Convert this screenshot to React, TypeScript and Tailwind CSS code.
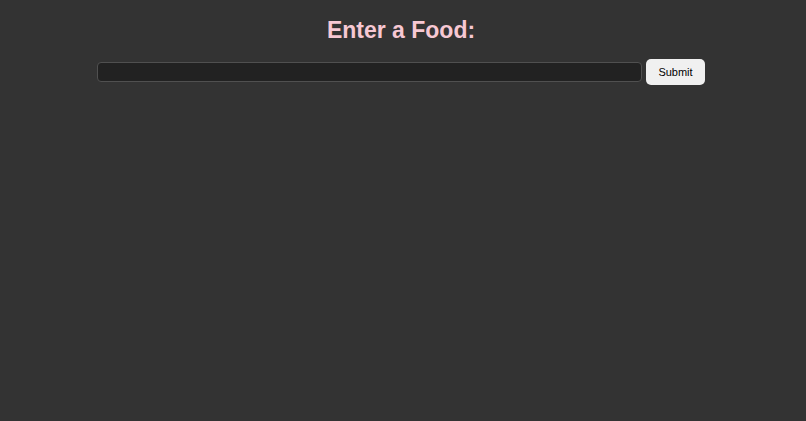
export default function App() {
  return (
    <div className="min-h-screen w-full bg-[#333333] font-['Liberation_Sans',Arial,sans-serif]">
      <div className="flex flex-col items-center pt-[16px] pr-[4px]">
        <h1 className="text-[23px] font-bold leading-[28px] text-[#f7c8d3]">Enter a Food:</h1>
        <form className="mt-[15px] flex items-center gap-[4px]" onSubmit={(e) => e.preventDefault()}>
          <input
            type="text"
            className="h-[20px] w-[545px] rounded-[4px] border border-[#505050] bg-[#222222] px-2 text-[13px] text-white outline-none"
          />
          <button
            type="submit"
            className="h-[26px] w-[59px] rounded-[5px] bg-[#f0f0f0] text-[11px] text-black"
          >
            Submit
          </button>
        </form>
      </div>
    </div>
  );
}
